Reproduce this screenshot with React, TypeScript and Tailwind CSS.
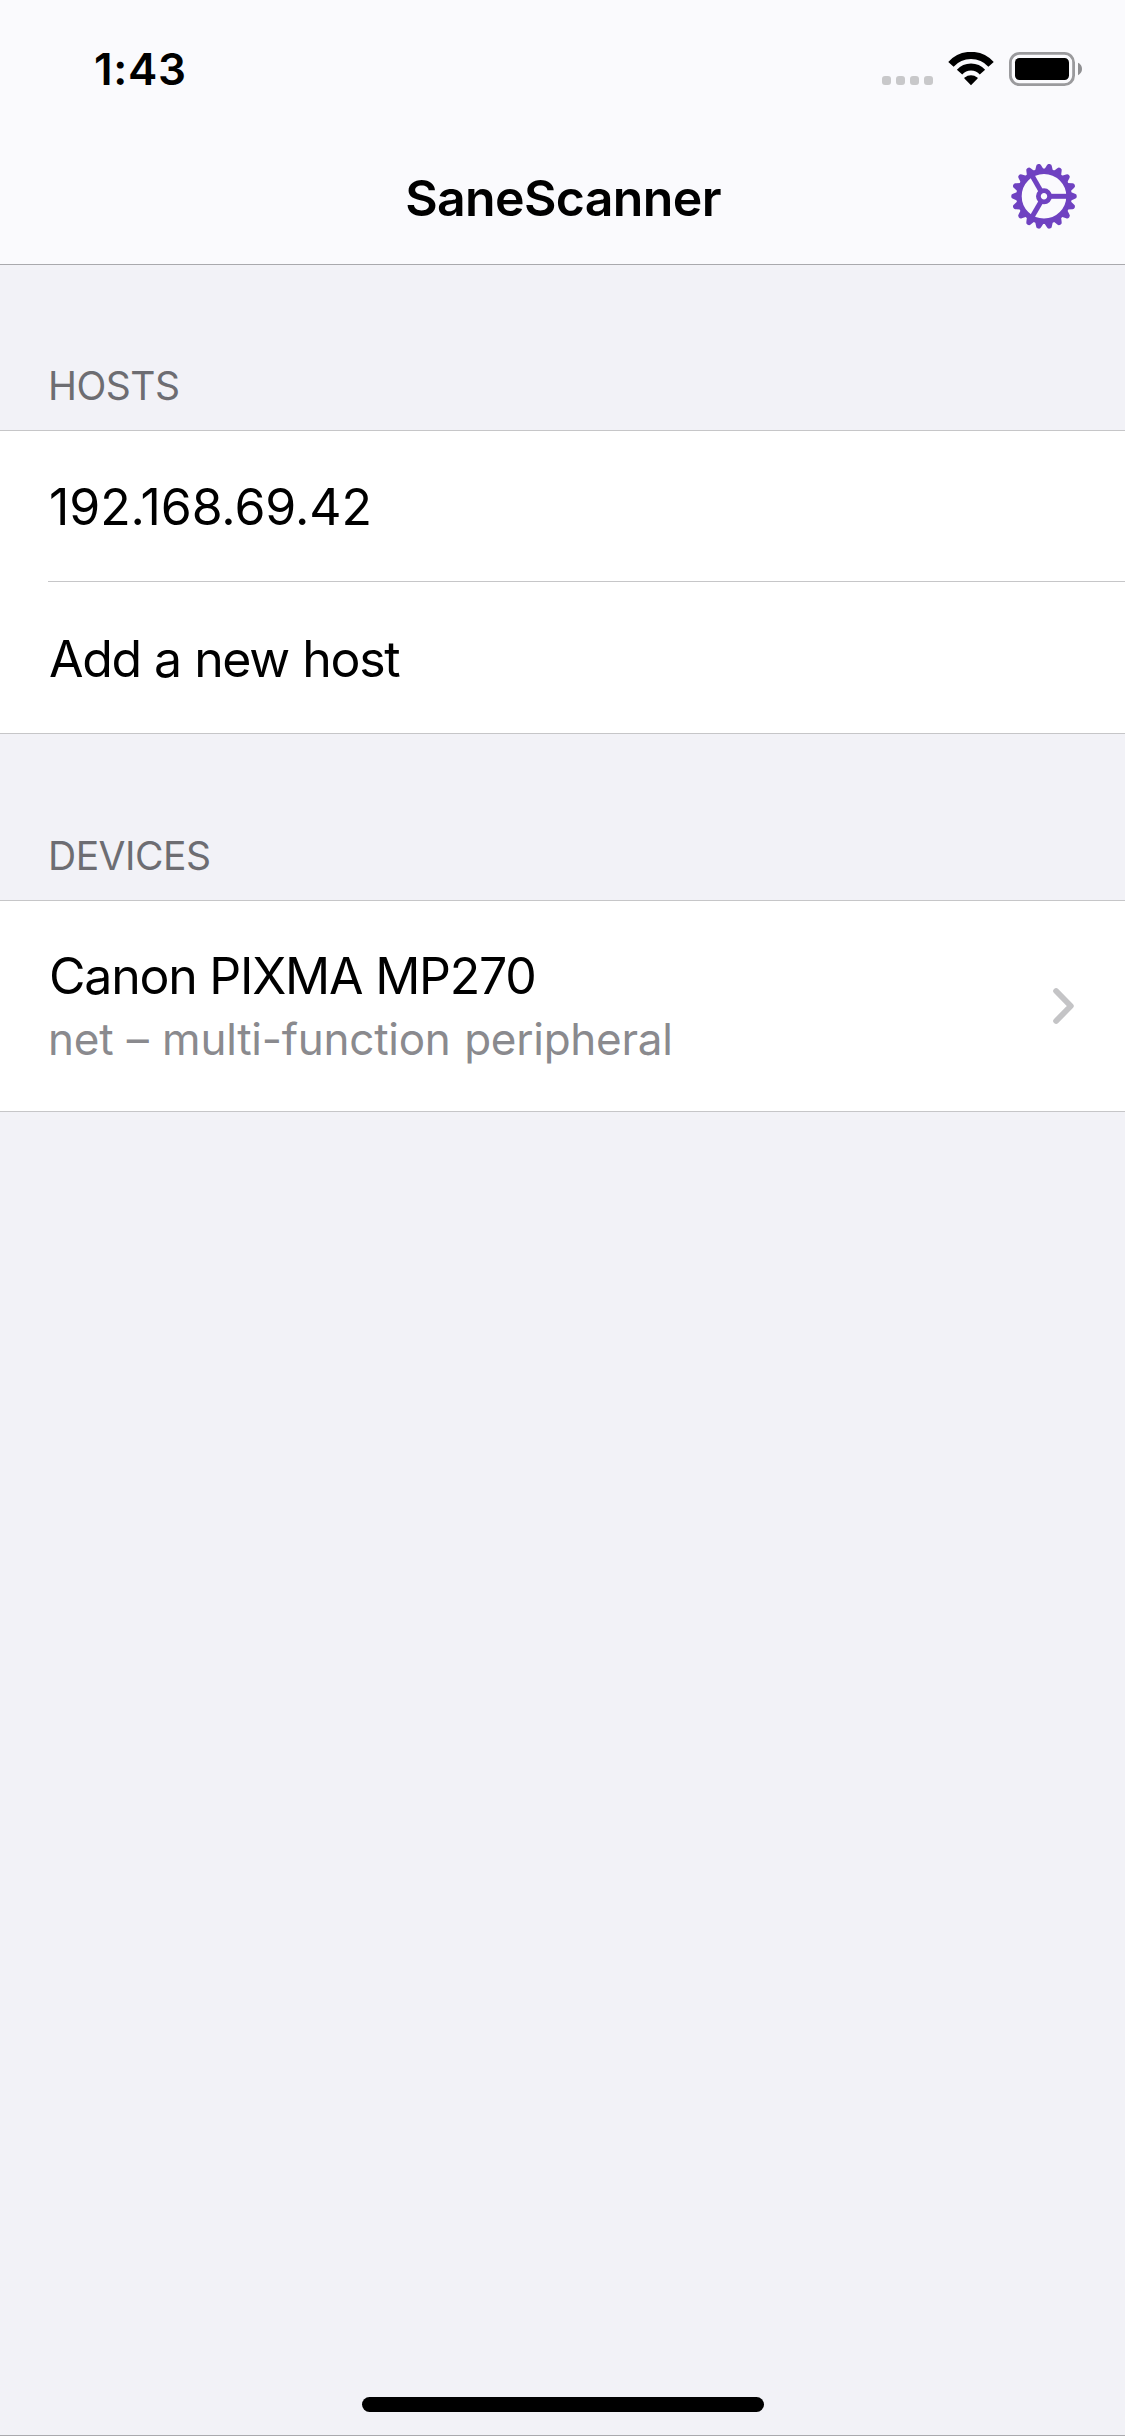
import React from 'react';

function Signal() {
  return (
    <div className="flex h-[34px] items-end gap-[5px] pb-px">
      {[0, 1, 2, 3].map((i) => (
        <span key={i} className="h-[9px] w-[9px] rounded-[3px] bg-[#c8c8ca]" />
      ))}
    </div>
  );
}

function Wifi() {
  return (
    <svg width="46" height="34" viewBox="0 0 46 34" className="ml-[15px]">
      <g fill="none" stroke="#000" strokeWidth="7.2">
        <path d="M2.94 12.34A27 27 0 0 1 43.06 12.34" />
        <path d="M11.56 20.1A15.4 15.4 0 0 1 34.44 20.1" />
      </g>
      <path
        d="M23 33.2L16.4 26.6Q16 26.1 16.6 25.6C20.2 22.3 25.8 22.3 29.4 25.6Q30 26.1 29.6 26.6Z"
        fill="#000"
      />
    </svg>
  );
}

function Battery() {
  return (
    <svg width="74" height="34" viewBox="0 0 74 34" className="ml-[15px]">
      <rect x="1.4" y="1.4" width="63.2" height="31.2" rx="9.2" fill="none" stroke="#9a9a9d" strokeWidth="2.8" />
      <rect x="6" y="6" width="54" height="22" rx="4.5" fill="#000" />
      <path d="M69 10.8C71.6 12 73 14.4 73 17S71.6 22 69 23.2Z" fill="#8f8f92" />
    </svg>
  );
}

const TEETH = Array.from({ length: 18 }, (_, i) => i * 20);

function Gear() {
  return (
    <svg width="68" height="68" viewBox="-34 -32.3 68 68" fill="none" stroke="#6f42c1">
      <circle r="25" strokeWidth="5.4" />
      <g fill="#6f42c1" stroke="none">
        {TEETH.map((a) => (
          <path key={a} d="M26 -4.6L31 -2.5Q32.8 -2.1 32.8 0T31 2.5L26 4.6Z" transform={`rotate(${a})`} />
        ))}
      </g>
      <circle r="5.6" strokeWidth="4.8" />
      {[0, 120, 240].map((a) => (
        <path key={a} d="M6.5 0H24" strokeWidth="5" transform={`rotate(${a})`} />
      ))}
    </svg>
  );
}

function SectionHeader({ children }: { children: React.ReactNode }) {
  return (
    <h2 className="pb-[19px] pl-12 text-[39px] leading-[50px] tracking-[-0.5px] text-[#6d6d72]">{children}</h2>
  );
}

export default function App() {
  return (
    <div className="flex h-[2436px] w-[1125px] flex-col overflow-hidden border-b border-[#a9a9ad] bg-[#f2f2f7] font-[Inter,sans-serif] text-black">
      <header className="h-[265px] border-b border-[#a9a9ad] bg-[#fafafd]">
        <div className="flex h-[138px] items-center justify-between pr-[42px] pl-[94px]">
          <time className="text-[44px] font-semibold leading-none tracking-[0.7px]">1:43</time>
          <div className="flex items-center">
            <Signal />
            <Wifi />
            <Battery />
          </div>
        </div>
        <div className="grid h-[120px] grid-cols-[1fr_auto_1fr] items-center pr-[47px] pl-[47px]">
          <span />
          <h1 className="pl-px text-[50px] font-semibold leading-none tracking-[-0.65px]">SaneScanner</h1>
          <button className="justify-self-end" aria-label="Settings">
            <Gear />
          </button>
        </div>
      </header>

      <section>
        <div className="flex h-[165px] flex-col justify-end">
          <SectionHeader>HOSTS</SectionHeader>
        </div>
        <ul className="border-y border-[#c6c6c8] bg-white text-[50px] leading-[60px]">
          <li className="flex h-[150px] items-center pt-[2px] pl-[49px] tracking-[-0.1px]">192.168.69.42</li>
          <li className="ml-12 flex h-[152px] items-center border-t border-[#c6c6c8] pt-[2px] pl-px tracking-[-1.3px] [word-spacing:0.5px]">
            Add a new host
          </li>
        </ul>
      </section>

      <section>
        <div className="flex h-[166px] flex-col justify-end">
          <SectionHeader>DEVICES</SectionHeader>
        </div>
        <div className="flex h-[212px] items-center justify-between border-y border-[#c6c6c8] bg-white pr-[48px] pl-12">
          <div className="flex flex-col gap-[3px] pt-[3px]">
            <span className="pl-px text-[50px] leading-[60px] tracking-[-1.23px]">Canon PIXMA MP270</span>
            <span className="text-[44px] leading-[60px] tracking-[-0.25px] text-[#8a8a8e] [word-spacing:1.4px]">
              net – multi-function peripheral
            </span>
          </div>
          <svg width="24" height="38" viewBox="0 0 24 38" fill="none">
            <path
              d="M3.1 4L17.8 19L3.1 34"
              stroke="#c4c4c6"
              strokeWidth="5.8"
              strokeLinecap="round"
              strokeLinejoin="round"
            />
          </svg>
        </div>
      </section>

      <div className="mt-auto mb-[23px] ml-[362px] h-[15px] w-[402px] rounded-full bg-black" />
    </div>
  );
}
